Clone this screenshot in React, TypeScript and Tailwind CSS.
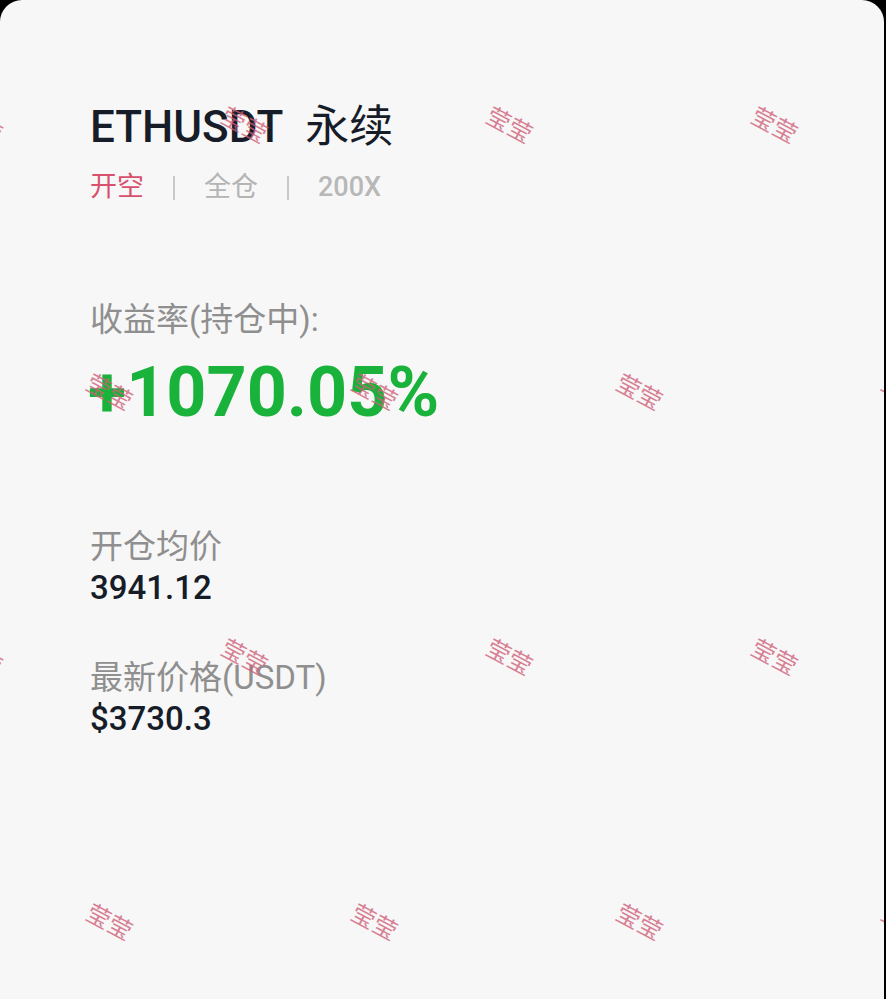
import React from "react";

// watermark grid: two staggered rows repeating every 265px
const marks: { x: number; y: number }[] = [];
[124, 391, 656, 921].forEach((y, row) => {
  const offset = row % 2 === 0 ? -20 : 110;
  for (let i = 0; i < 4; i++) {
    marks.push({ x: offset + i * 265, y });
  }
});

function Watermarks() {
  return (
    <div className="absolute inset-0 pointer-events-none overflow-hidden">
      {marks.map((m, i) => (
        <span
          key={i}
          className="absolute -translate-x-1/2 -translate-y-1/2 rotate-[28deg] text-[24px] leading-none text-[#cf5f79]/80 whitespace-nowrap font-['Noto_Sans_CJK_SC',sans-serif]"
          style={{ left: m.x, top: m.y }}
        >
          莹莹
        </span>
      ))}
    </div>
  );
}

export default function App() {
  return (
    <div className="min-h-screen bg-black">
      <div className="relative w-[884px] h-[999px] bg-[#f7f7f7] rounded-t-[22px] overflow-hidden pl-[90px] pt-[105px] font-['Roboto','Noto_Sans_CJK_SC',sans-serif]">
        {/* Title */}
        <div className="flex items-baseline text-[44px] leading-none text-[#161c28]">
          <span className="font-medium">ETHUSDT</span>
          <span className="ml-[22px] font-normal">永续</span>
        </div>

        {/* Position tags */}
        <div className="mt-[25px] flex items-center text-[27px] leading-none">
          <span className="text-[#d9506f]">开空</span>
          <div className="mx-[29px] w-[2px] h-[24px] bg-[#c8c8c8]" />
          <span className="text-[#b4b4b4]">全仓</span>
          <div className="mx-[29px] w-[2px] h-[24px] bg-[#c8c8c8]" />
          <span className="text-[#b8b8b8] font-medium">200X</span>
        </div>

        {/* ROE */}
        <div className="mt-[102px] text-[33px] leading-none text-[#8f8f8f]">
          收益率(持仓中):
        </div>
        <div className="mt-[21px] -ml-[2px] text-[70px] leading-none font-bold text-[#19b23a]">
          +1070.05%
        </div>

        {/* Entry price */}
        <div className="mt-[103px] text-[33px] leading-none text-[#8f8f8f]">
          开仓均价
        </div>
        <div className="mt-[8px] text-[33px] leading-none font-medium text-[#161c28]">
          3941.12
        </div>

        {/* Mark price */}
        <div className="mt-[57px] text-[33px] leading-none text-[#8f8f8f]">
          最新价格(USDT)
        </div>
        <div className="mt-[8px] text-[33px] leading-none font-medium text-[#161c28]">
          $3730.3
        </div>

        <Watermarks />
      </div>
    </div>
  );
}
